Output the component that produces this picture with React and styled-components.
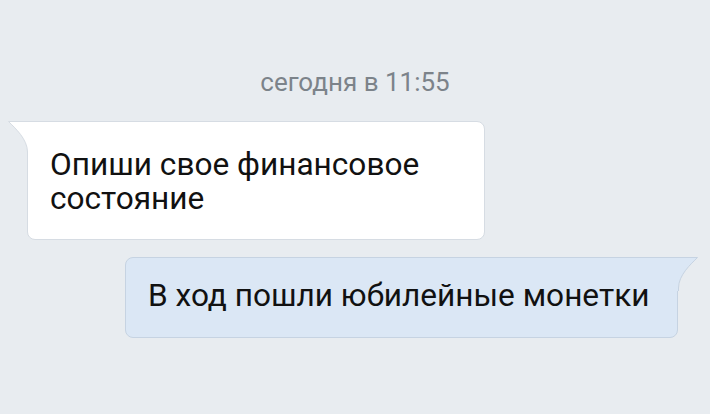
import styled, { createGlobalStyle } from "styled-components";

const GlobalStyle = createGlobalStyle`
  html, body {
    margin: 0;
    padding: 0;
    background: #e8ecf0;
  }
  body {
    font-family: Roboto, "Noto Sans", sans-serif;
  }
`

const Page = styled.div`
  width: 710px;
  height: 414px;
  display: flex;
  flex-direction: column;
  background: #e8ecf0;
  overflow: hidden;
`
const Stamp = styled.div`
  text-align: center;
  font-size: 26px;
  color: #7c838a;
  margin-top: 67px;
  line-height: 30px;
`
const Row = styled.div`
  display: flex;
  justify-content: ${props => props.out ? "flex-end" : "flex-start"};
  padding: ${props => props.out ? "0 32px 0 0" : "0 0 0 27px"};
  margin-top: ${props => props.gap}px;
`
const Bubble = styled.div`
  position: relative;
  box-sizing: border-box;
  width: ${props => props.w}px;
  min-height: ${props => props.h}px;
  padding: ${props => props.out ? "21px 20px 0 22px" : "26px 20px 0 22px"};
  background: ${props => props.out ? "#dbe7f5" : "#ffffff"};
  border: 1px solid ${props => props.out ? "#c6d3e2" : "#d6dce3"};
  border-radius: ${props => props.out ? "8px 0 8px 8px" : "0 8px 8px 8px"};
  font-size: 31.6px;
  line-height: 34px;
  color: #111;
  white-space: nowrap;
`
const Tail = styled.svg`
  position: absolute;
  top: -1px;
  ${props => props.out ? "right: -21px;" : "left: -20px;"}
  width: 21px;
  height: 34px;
  overflow: visible;
`

function IncomingTail() {
    return (
        <Tail viewBox="0 0 21 34">
            <path d="M0.5 0.5 C 7 7 19.5 18 19.5 31 L 19.5 34 L 21 34 L 21 0.5 Z" fill="#ffffff"/>
            <path d="M21 0.5 L0.5 0.5 C 7 7 19.5 18 19.5 31 L 19.5 34" fill="none" stroke="#d6dce3" strokeWidth="1"/>
        </Tail>
    )
}

function OutgoingTail() {
    return (
        <Tail out viewBox="0 0 21 34">
            <path d="M20.5 0.5 C 14 7 1.5 18 1.5 31 L 1.5 34 L 0 34 L 0 0.5 Z" fill="#dbe7f5"/>
            <path d="M0 0.5 L20.5 0.5 C 14 7 1.5 18 1.5 31 L 1.5 34" fill="none" stroke="#c6d3e2" strokeWidth="1"/>
        </Tail>
    )
}

function App() {
    return (
        <>
            <GlobalStyle/>
            <Page>
                <Stamp>сегодня в 11:55</Stamp>
                <Row gap={24}>
                    <Bubble w={458} h={119}>
                        <IncomingTail/>
                        Опиши свое финансовое<br/>состояние
                    </Bubble>
                </Row>
                <Row out gap={17}>
                    <Bubble out w={553} h={81}>
                        <OutgoingTail/>
                        В ход пошли юбилейные монетки
                    </Bubble>
                </Row>
            </Page>
        </>
    )
}
export default App;
